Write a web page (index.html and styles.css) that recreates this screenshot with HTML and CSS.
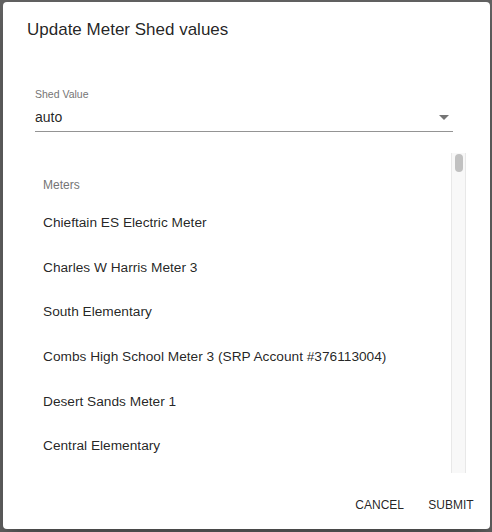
FILE: index.html
```html
<!DOCTYPE html>
<html>

<head>
  <meta charset="utf-8">
  <title>Update Meter Shed values</title>
  <link rel="stylesheet" href="styles.css">
</head>

<body>
  <div class="dialog">
    <h2 class="dialog-title">Update Meter Shed values</h2>

    <div class="dialog-content">
      <div class="field">
        <label class="field-label" for="shed-value">Shed Value</label>
        <div class="select" id="shed-value">
          auto
          <!-- dropdown arrow -->
          <svg class="select-arrow" width="10" height="5" viewBox="0 0 10 5">
            <polygon points="0,0 10,0 5,5" fill="#757575" />
          </svg>
        </div>
      </div>

      <div class="meters">
        <ul class="meter-list">
          <li class="subheader">Meters</li>
          <li class="meter">Chieftain ES Electric Meter</li>
          <li class="meter">Charles W Harris Meter 3</li>
          <li class="meter">South Elementary</li>
          <li class="meter">Combs High School Meter 3 (SRP Account #376113004)</li>
          <li class="meter">Desert Sands Meter 1</li>
          <li class="meter">Central Elementary</li>
        </ul>
        <div class="scrollbar">
          <div class="scrollbar-thumb"></div>
        </div>
      </div>
    </div>

    <div class="dialog-actions">
      <button class="button">Cancel</button>
      <button class="button">Submit</button>
    </div>
  </div>
</body>

</html>
```
FILE: styles.css
```css
body {
  margin: 0;
  background: #626262;
  font-family: "Liberation Sans", Arial, sans-serif;
  color: rgba(0, 0, 0, 0.87);
}

.dialog {
  margin: 2px 2px 3px 3px;
  width: 487px;
  height: 527px;
  background: #fff;
  border-radius: 4px;
  box-shadow: 0 11px 15px -7px rgba(0, 0, 0, 0.2), 0 24px 38px 3px rgba(0, 0, 0, 0.14);
  display: flex;
  flex-direction: column;
  overflow: hidden;
}

.dialog-title {
  margin: 0;
  padding: 18px 24px 0;
  font-size: 17px;
  font-weight: normal;
  line-height: 20px;
}

.dialog-content {
  padding: 0 24px;
}

.field {
  margin: 48px 13px 0 8px;
}

.field-label {
  display: block;
  font-size: 10.5px;
  line-height: 12px;
  color: #757575;
  margin-bottom: 7px;
}

.select {
  position: relative;
  font-size: 14px;
  line-height: 20px;
  padding-bottom: 4px;
  border-bottom: 1px solid #949494;
}

.select-arrow {
  position: absolute;
  right: 4px;
  top: 8px;
}

.meters {
  margin-top: 21px;
  height: 320px;
  display: flex;
}

.meter-list {
  flex: 1;
  list-style: none;
  margin: 0;
  padding: 8px 0 0;
  overflow: hidden;
}

.subheader {
  padding: 16px 16px 7px;
  font-size: 12px;
  line-height: 16px;
  color: #757575;
}

.meter {
  height: 44.7px;
  padding: 0 16px;
  display: flex;
  align-items: center;
  font-size: 13.7px;
  white-space: nowrap;
}

.scrollbar {
  width: 15px;
  background: #f8f8f8;
  border-left: 1px solid #e8e8e8;
  border-right: 1px solid #e8e8e8;
  padding: 1px 2px 0;
  box-sizing: border-box;
}

.scrollbar-thumb {
  width: 8px;
  height: 18px;
  margin-left: 1px;
  border-radius: 4px;
  background: #c1c1c1;
}

.dialog-actions {
  margin-top: auto;
  padding: 8px 7px 8px 8px;
  display: flex;
  justify-content: flex-end;
  gap: 7px;
}

.button {
  min-width: 64px;
  padding: 6px 8px;
  border: none;
  background: none;
  font-family: inherit;
  font-size: 12px;
  line-height: 20px;
  text-transform: uppercase;
  color: rgba(0, 0, 0, 0.87);
}
```
